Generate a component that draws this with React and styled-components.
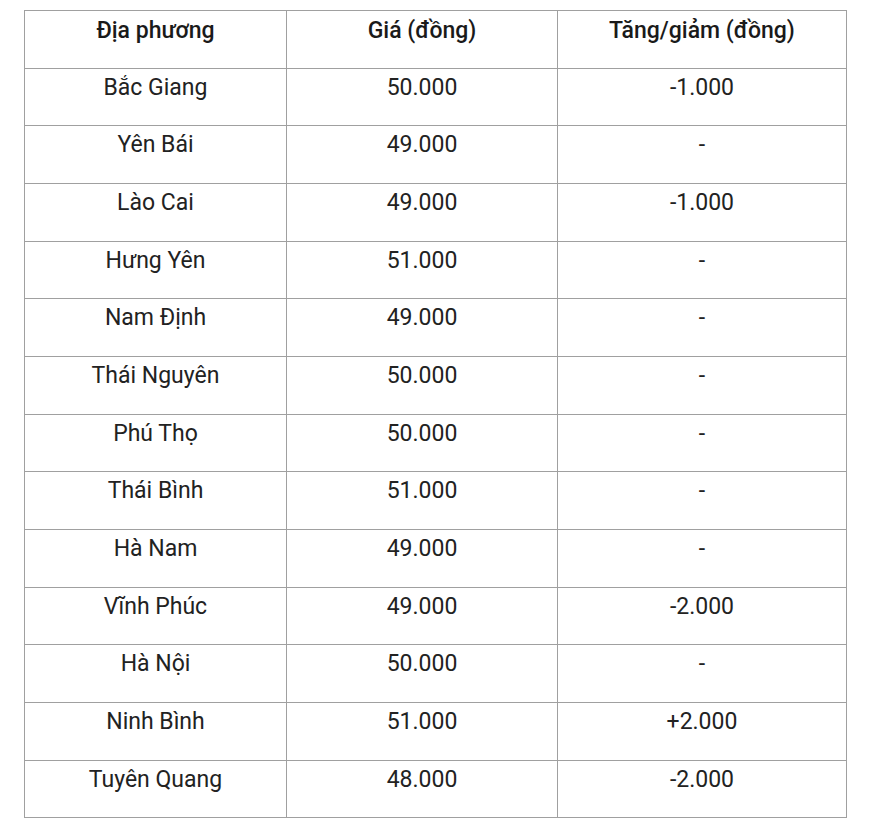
import React from "react";
import styled, { createGlobalStyle } from "styled-components";

const rows = [
  ["Bắc Giang", "50.000", "-1.000"],
  ["Yên Bái", "49.000", "-"],
  ["Lào Cai", "49.000", "-1.000"],
  ["Hưng Yên", "51.000", "-"],
  ["Nam Định", "49.000", "-"],
  ["Thái Nguyên", "50.000", "-"],
  ["Phú Thọ", "50.000", "-"],
  ["Thái Bình", "51.000", "-"],
  ["Hà Nam", "49.000", "-"],
  ["Vĩnh Phúc", "49.000", "-2.000"],
  ["Hà Nội", "50.000", "-"],
  ["Ninh Bình", "51.000", "+2.000"],
  ["Tuyên Quang", "48.000", "-2.000"],
];

function App() {
  return (
    <>
      <GlobalStyle />
      <Wrapper>
        <PriceTable>
          <colgroup>
            <col style={{ width: 262 }} />
            <col style={{ width: 271 }} />
            <col style={{ width: 289 }} />
          </colgroup>
          <thead>
            <tr>
              <HeadCell>Địa phương</HeadCell>
              <HeadCell>Giá (đồng)</HeadCell>
              <HeadCell>Tăng/giảm (đồng)</HeadCell>
            </tr>
          </thead>
          <tbody>
            {rows.map((row) => (
              <tr key={row[0]}>
                {row.map((value, i) => (
                  <Cell key={i}>{value}</Cell>
                ))}
              </tr>
            ))}
          </tbody>
        </PriceTable>
      </Wrapper>
    </>
  );
}

export default App;

const GlobalStyle = createGlobalStyle`
  body {
    margin: 0;
    background: #ffffff;
    font-family: Roboto, "Liberation Sans", Arial, sans-serif;
    color: #222222;
  }
`;

const Wrapper = styled.div`
  padding: 10px 0 0 24px;
`;

const PriceTable = styled.table`
  width: 822px;
  border-collapse: collapse;
  table-layout: fixed;
`;

const Cell = styled.td`
  border: 1px solid #a0a0a0;
  padding: 4px 5px 22.67px;
  height: 30px;
  line-height: 30px;
  font-size: 23px;
  text-align: center;
  vertical-align: top;
  color: #222222;
`;

const HeadCell = styled(Cell).attrs({ as: "th" })`
  padding-top: 5px;
  padding-bottom: 21.67px;
  font-weight: 500;
  color: #1a1a1a;
`;
